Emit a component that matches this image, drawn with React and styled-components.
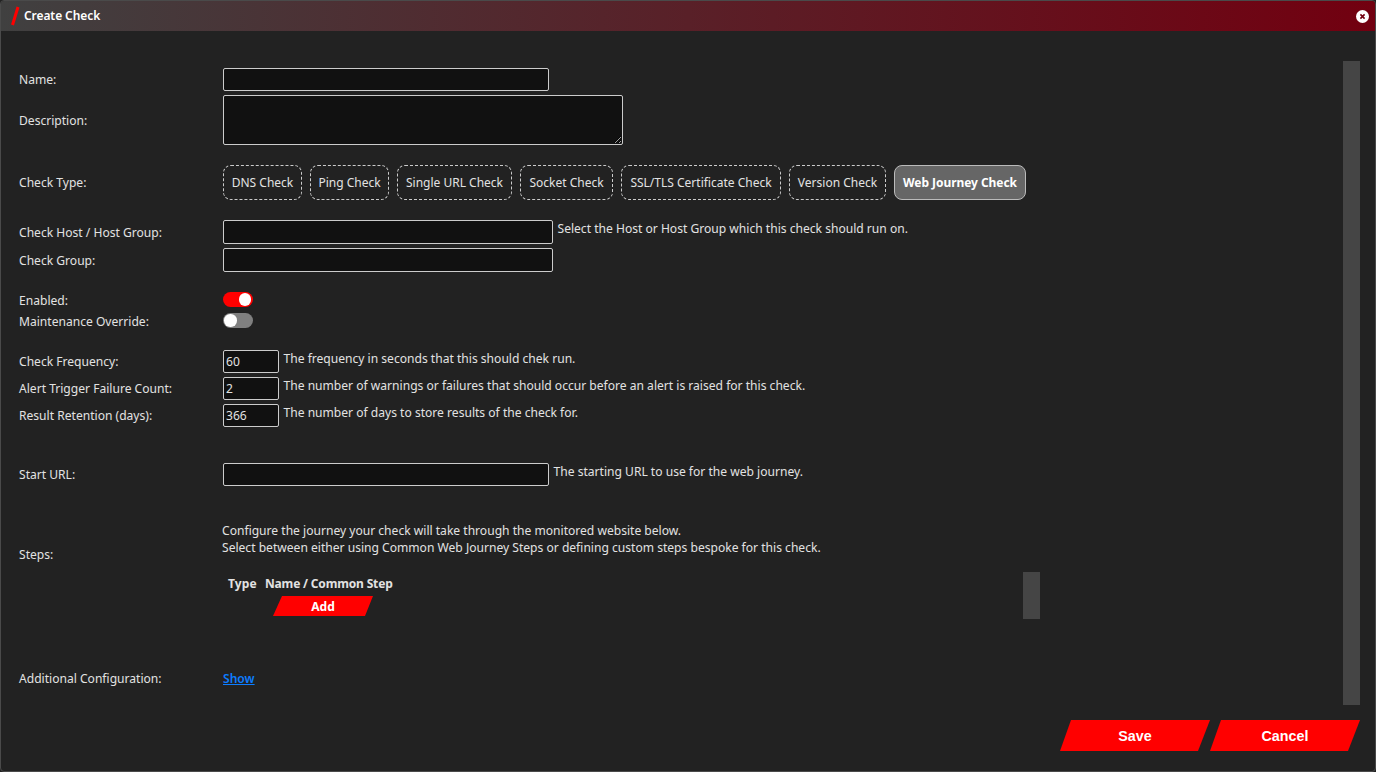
import React from 'react';
import styled, { createGlobalStyle } from 'styled-components';

const GlobalStyle = createGlobalStyle`
  html, body {
    margin: 0;
    padding: 0;
    height: 100%;
    background-color: #222222;
  }
  body {
    font-family: "Noto Sans", "Open Sans", sans-serif;
    font-size: 12.08px;
    color: #e2e2e2;
    overflow: hidden;
  }
`;

const Dialog = styled.div`
  display: flex;
  flex-direction: column;
  height: 772px;
  width: 1376px;
  box-sizing: border-box;
  border: 1px solid #4a4a4a;
  border-radius: 4px;
  overflow: hidden;
  background-color: #222222;
`;

const TitleBar = styled.div`
  display: flex;
  align-items: center;
  height: 30px;
  padding: 0 6px 0 9px;
  background: linear-gradient(90deg, #404040 0%, #720010 100%);
  color: #ffffff;
  font-size: 12px;
  font-weight: 600;
  letter-spacing: -0.08px;
  flex-shrink: 0;
`;

const Title = styled.span`
  margin-left: 4px;
  padding-bottom: 2px;
  flex: 1;
`;

const Body = styled.div`
  display: flex;
  flex: 1;
  min-height: 0;
`;

const Content = styled.div`
  flex: 1;
  padding: 37px 0 0 18px;
`;

const Scrollbar = styled.div`
  width: 17px;
  flex-shrink: 0;
  background-color: #454545;
  margin: ${({ $margin }) => $margin || 0};
  height: ${({ $height }) => $height}px;
`;

const Row = styled.div`
  display: flex;
  align-items: ${({ $align }) => $align || 'center'};
  margin-top: ${({ $top }) => $top || 0}px;
`;

const Label = styled.div`
  width: 204px;
  flex-shrink: 0;
  line-height: ${({ $lineHeight }) => $lineHeight || 15}px;
  padding-top: ${({ $pad }) => $pad || 0}px;
`;

const Input = styled.input`
  box-sizing: border-box;
  width: ${({ $width }) => $width}px;
  height: ${({ $height }) => $height || 23}px;
  padding: 1px 2px;
  border: 1px solid #cccccc;
  border-radius: 2px;
  background-color: #111111;
  color: #e2e2e2;
  font: inherit;
  outline: none;
`;

const TextArea = styled.textarea`
  display: block;
  box-sizing: border-box;
  width: 400px;
  height: 50px;
  padding: 2px;
  border: 1px solid #cccccc;
  border-radius: 2px;
  background-color: #111111;
  color: #e2e2e2;
  font: inherit;
  outline: none;
`;

const Help = styled.span`
  margin-left: 4.5px;
  align-self: flex-start;
  line-height: 17px;
`;

const TypeList = styled.div`
  display: flex;
  gap: 8px;
`;

const TypeButton = styled.button`
  width: ${({ $width }) => $width}px;
  height: 35px;
  box-sizing: border-box;
  padding: 0;
  border: 1px ${({ $active }) => ($active ? 'solid #bbbbbb' : 'dashed #cccccc')};
  border-radius: 8px;
  background-color: ${({ $active }) => ($active ? '#666666' : 'transparent')};
  color: ${({ $active }) => ($active ? '#ffffff' : '#e2e2e2')};
  font: inherit;
  font-size: 12px;
  font-weight: ${({ $active }) => ($active ? 700 : 400)};
  letter-spacing: ${({ $active }) => ($active ? '-0.05px' : '0')};
`;

const Toggle = styled.div`
  display: flex;
  align-items: center;
  justify-content: ${({ $on }) => ($on ? 'flex-end' : 'flex-start')};
  width: 30px;
  height: 15px;
  box-sizing: border-box;
  padding: 0 2px 0 1px;
  border-radius: 8px;
  background-color: ${({ $on }) => ($on ? '#ff0000' : '#808080')};

  &::after {
    content: '';
    width: 12.5px;
    height: 12.5px;
    border-radius: 50%;
    background-color: #ffffff;
  }
`;

const StepsIntro = styled.div`
  line-height: 17px;
`;

const StepsColumn = styled.div`
  flex: 0 0 818px;
  margin-left: -1px;
`;

const StepsPanel = styled.div`
  display: flex;
  justify-content: space-between;
  height: 47px;
  margin-top: 16px;
`;

const StepsTable = styled.div`
  display: grid;
  grid-template-columns: 37px auto;
  grid-template-rows: 24px 20px;
  justify-content: start;
  align-items: center;
  padding-left: 6px;
`;

const HeadCell = styled.div`
  padding-bottom: 2px;
  font-size: 12px;
  font-weight: 700;
  letter-spacing: ${({ $tight }) => ($tight ? '-0.17px' : '0.1px')};
`;

const AddButton = styled.button`
  grid-column: 2;
  width: 100px;
  height: 20px;
  margin-left: 8px;
  padding: 0;
  border: none;
  clip-path: polygon(9px 0, 100% 0, 92px 100%, 0 100%);
  background-color: #ff0000;
  color: #ffffff;
  font: inherit;
  font-weight: 700;
`;

const ShowLink = styled.a`
  color: #0d7dff;
  font-weight: 600;
  line-height: 15px;
  text-decoration: underline;
`;

const Footer = styled.div`
  display: flex;
  justify-content: flex-end;
  padding: 14px 15px 20px 0;
  flex-shrink: 0;
`;

const ActionButton = styled.button`
  width: 150px;
  height: 31px;
  padding: 0;
  border: none;
  clip-path: polygon(11px 0, 100% 0, 138px 100%, 0 100%);
  background-color: #ff0000;
  color: #ffffff;
  font-family: "Liberation Sans", Arial, sans-serif;
  font-size: 14.3px;
  font-weight: 700;
`;

const checkTypes = [
  { name: 'DNS Check', width: 79 },
  { name: 'Ping Check', width: 79 },
  { name: 'Single URL Check', width: 115 },
  { name: 'Socket Check', width: 93 },
  { name: 'SSL/TLS Certificate Check', width: 160 },
  { name: 'Version Check', width: 97 },
  { name: 'Web Journey Check', width: 132, active: true },
];

const App = () => {
  return (
    <>
      <GlobalStyle />
      <Dialog>
        <TitleBar>
          <svg width="10" height="20" viewBox="0 0 10 20">
            <path d="M8 1 L2.5 19" stroke="#ff0000" strokeWidth="3" fill="none" />
          </svg>
          <Title>Create Check</Title>
          <svg width="13" height="13" viewBox="0 0 13 13">
            <circle cx="6.5" cy="6.5" r="6.5" fill="#ffffff" />
            <path d="M4.4 4.4 L8.6 8.6 M8.6 4.4 L4.4 8.6" stroke="#720010" strokeWidth="1.6" />
          </svg>
        </TitleBar>
        <Body>
          <Content>
            <Row>
              <Label>Name:</Label>
              <Input $width={326} readOnly />
            </Row>
            <Row $top={4}>
              <Label>Description:</Label>
              <TextArea readOnly />
            </Row>
            <Row $top={20}>
              <Label>Check Type:</Label>
              <TypeList>
                {checkTypes.map((type) => (
                  <TypeButton key={type.name} $width={type.width} $active={type.active}>{type.name}</TypeButton>
                ))}
              </TypeList>
            </Row>
            <Row $top={20}>
              <Label>Check Host / Host Group:</Label>
              <Input $width={330} $height={24} readOnly />
              <Help>Select the Host or Host Group which this check should run on.</Help>
            </Row>
            <Row $top={4}>
              <Label>Check Group:</Label>
              <Input $width={330} $height={24} readOnly />
            </Row>
            <Row $top={20} $align="flex-start">
              <Label $lineHeight={17}>Enabled:</Label>
              <Toggle $on />
            </Row>
            <Row $top={4} $align="flex-start">
              <Label $lineHeight={17}>Maintenance Override:</Label>
              <Toggle />
            </Row>
            <Row $top={20}>
              <Label>Check Frequency:</Label>
              <Input $width={56} value="60" readOnly />
              <Help>The frequency in seconds that this should chek run.</Help>
            </Row>
            <Row $top={4}>
              <Label>Alert Trigger Failure Count:</Label>
              <Input $width={56} value="2" readOnly />
              <Help>The number of warnings or failures that should occur before an alert is raised for this check.</Help>
            </Row>
            <Row $top={4}>
              <Label>Result Retention (days):</Label>
              <Input $width={56} value="366" readOnly />
              <Help>The number of days to store results of the check for.</Help>
            </Row>
            <Row $top={36}>
              <Label>Start URL:</Label>
              <Input $width={326} readOnly />
              <Help>The starting URL to use for the web journey.</Help>
            </Row>
            <Row $top={36} $align="flex-start">
              <Label $pad={25}>Steps:</Label>
              <StepsColumn>
                <StepsIntro>
                  Configure the journey your check will take through the monitored website below.<br />
                  Select between either using Common Web Journey Steps or defining custom steps bespoke for this check.
                </StepsIntro>
                <StepsPanel>
                  <StepsTable>
                    <HeadCell>Type</HeadCell>
                    <HeadCell $tight>Name / Common Step</HeadCell>
                    <AddButton>Add</AddButton>
                  </StepsTable>
                  <Scrollbar $height={47} />
                </StepsPanel>
              </StepsColumn>
            </Row>
            <Row $top={52}>
              <Label>Additional Configuration:</Label>
              <ShowLink href="#">Show</ShowLink>
            </Row>
          </Content>
          <Scrollbar $height={644} $margin="30px 15px 0 0" />
        </Body>
        <Footer>
          <ActionButton>Save</ActionButton>
          <ActionButton>Cancel</ActionButton>
        </Footer>
      </Dialog>
    </>
  );
};

export default App;
